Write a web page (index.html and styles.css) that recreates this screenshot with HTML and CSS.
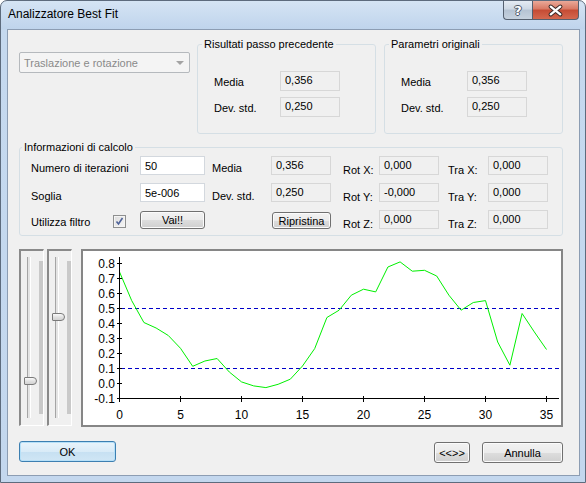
FILE: index.html
```html
<!DOCTYPE html>
<html lang="it">
<head>
    <meta charset="UTF-8">
    <title>Analizzatore Best Fit</title>
    <link rel="stylesheet" href="styles.css">
</head>
<body>
<div class="window">
    <div class="titlebar">
        <span class="title">Analizzatore Best Fit</span>
        <div class="caption-buttons">
            <span class="cap-btn help">?</span>
            <span class="cap-btn close">
                <svg width="47" height="19" viewBox="0 0 47 19">
                    <path d="M18.5 5.5L28.5 13.5M28.5 5.5L18.5 13.5" stroke="#3b2a28" stroke-width="4.5" stroke-linecap="round"/>
                    <path d="M18.5 5.5L28.5 13.5M28.5 5.5L18.5 13.5" stroke="#fff" stroke-width="2.4" stroke-linecap="round"/>
                </svg>
            </span>
        </div>
    </div>

    <div class="client">
        <!-- riga superiore -->
        <div class="top-row">
            <div class="combo">
                <span>Traslazione e rotazione</span>
                <span class="arrow"></span>
            </div>

            <fieldset class="group results">
                <legend>Risultati passo precedente</legend>
                <div class="stats">
                    <span class="lbl">Media</span><span class="ro">0,356</span>
                    <span class="lbl">Dev. std.</span><span class="ro">0,250</span>
                </div>
            </fieldset>

            <fieldset class="group original">
                <legend>Parametri originali</legend>
                <div class="stats">
                    <span class="lbl">Media</span><span class="ro">0,356</span>
                    <span class="lbl">Dev. std.</span><span class="ro">0,250</span>
                </div>
            </fieldset>
        </div>

        <!-- informazioni di calcolo -->
        <fieldset class="group calc">
            <legend>Informazioni di calcolo</legend>
            <div class="calc-grid">
                <span class="lbl">Numero di iterazioni</span>
                <input class="edit" type="text" value="50">
                <span class="lbl mid">Media</span>
                <span class="ro">0,356</span>
                <span class="lbl rot">Rot X:</span>
                <span class="ro">0,000</span>
                <span class="lbl tra">Tra X:</span>
                <span class="ro">0,000</span>

                <span class="lbl low">Soglia</span>
                <input class="edit" type="text" value="5e-006">
                <span class="lbl mid low">Dev. std.</span>
                <span class="ro">0,250</span>
                <span class="lbl rot">Rot Y:</span>
                <span class="ro">-0,000</span>
                <span class="lbl tra">Tra Y:</span>
                <span class="ro">0,000</span>

                <div class="check-cell">
                    <span class="lbl">Utilizza filtro</span>
                    <span class="checkbox">
                        <svg width="11" height="11" viewBox="0 0 11 11">
                            <path d="M2.5 5.5L4.5 8L8.5 2" fill="none" stroke="#4f6399" stroke-width="1.6"/>
                        </svg>
                    </span>
                </div>
                <button class="btn btn-go">Vai!!</button>
                <span></span>
                <button class="btn btn-reset">Ripristina</button>
                <span class="lbl rot">Rot Z:</span>
                <span class="ro">0,000</span>
                <span class="lbl tra">Tra Z:</span>
                <span class="ro">0,000</span>
            </div>
        </fieldset>

        <!-- grafico -->
        <div class="chart-row">
            <div class="slider">
                <div class="channel"></div>
                <div class="tickbar"></div>
                <div class="thumb" style="top: 126px;"></div>
            </div>
            <div class="slider">
                <div class="channel"></div>
                <div class="tickbar"></div>
                <div class="thumb" style="top: 62px;"></div>
            </div>
            <div class="chart">
                <svg class="plot" width="478" height="174" viewBox="0 0 478 174">
                    <path d="M38 57.5H476M38 117.5H476" stroke="#0000c8" stroke-dasharray="4 3"/>
                    <path d="M37 57.5h2M37 117.5h2" stroke="#e0e000"/>
                    <polyline fill="none" stroke="#00f000" stroke-width="1"
                        points="36.5,20.9 48.7,49.6 60.9,71.5 73.1,77 85.3,84.5 97.5,97.3 109.7,115.3 121.9,110 134.1,107.5 146.3,121 158.5,130.9 170.7,134.9 182.9,136.6 195.1,133.3 207.3,128.2 219.5,115 231.7,97.6 243.9,66.5 256.1,59.2 268.3,44.2 280.5,38.2 292.7,40.9 304.9,16 317.1,10.9 329.3,20.2 341.5,19.3 353.7,25 365.9,44.2 378.1,59.2 390.3,51.5 402.5,49.6 414.7,91 426.9,114.2 439.1,62.5 451.3,80.9 463.5,98.5"/>
                    <g stroke="#000" fill="none">
                        <path d="M36.5 6V147.5M34 147.5H476"/>
                        <path d="M34 12.5H39M34 27.5H39M34 42.5H39M34 57.5H39M34 72.5H39M34 87.5H39M34 102.5H39M34 117.5H39M34 132.5H39"/>
                        <path d="M36.5 145V151M97.5 145V151M158.5 145V151M219.5 145V151M280.5 145V151M341.5 145V151M402.5 145V151M463.5 145V151"/>
                    </g>
                    <g class="y-labels">
                        <text x="32" y="17">0.8</text>
                        <text x="32" y="32">0.7</text>
                        <text x="32" y="47">0.6</text>
                        <text x="32" y="62">0.5</text>
                        <text x="32" y="77">0.4</text>
                        <text x="32" y="92">0.3</text>
                        <text x="32" y="107">0.2</text>
                        <text x="32" y="122">0.1</text>
                        <text x="32" y="137">0.0</text>
                        <text x="32" y="152">-0.1</text>
                    </g>
                    <g class="x-labels">
                        <text x="36.5" y="168">0</text>
                        <text x="97.5" y="168">5</text>
                        <text x="158.5" y="168">10</text>
                        <text x="219.5" y="168">15</text>
                        <text x="280.5" y="168">20</text>
                        <text x="341.5" y="168">25</text>
                        <text x="402.5" y="168">30</text>
                        <text x="463.5" y="168">35</text>
                    </g>
                </svg>
            </div>
        </div>

        <!-- pulsanti -->
        <div class="button-row">
            <button class="btn btn-ok">OK</button>
            <button class="btn btn-swap">&lt;&lt;&gt;&gt;</button>
            <button class="btn btn-cancel">Annulla</button>
        </div>
    </div>
</div>
</body>
</html>
```

FILE: styles.css
```css
* {
    box-sizing: border-box;
}

body {
    margin: 0;
    background: #fff;
    font-family: "Liberation Sans", Arial, sans-serif;
    font-size: 11px;
    color: #000;
}

/* Finestra */
.window {
    width: 586px;
    height: 483px;
    border: 1px solid #5d6b7d;
    border-radius: 7px 7px 0 0;
    background: linear-gradient(#d5e4f4, #bfd4ec 28px, #c5d9ef 29px, #c3d7ee);
    overflow: hidden;
}

.titlebar {
    display: flex;
    align-items: flex-start;
    height: 28px;
    padding-left: 7px;
}

.title {
    font-size: 12px;
    line-height: 27px;
}

.caption-buttons {
    display: flex;
    margin-left: auto;
    margin-right: 6px;
}

.cap-btn {
    display: flex;
    align-items: center;
    justify-content: center;
    height: 19px;
    border: 1px solid #55606f;
    border-top: none;
}

.cap-btn.help {
    width: 29px;
    border-right: none;
    border-radius: 0 0 0 4px;
    background: linear-gradient(#e4ebf3, #cdd8e4 45%, #b5c3d3 50%, #c6d2df);
    color: #fff;
    font-family: "DejaVu Sans", sans-serif;
    font-size: 13px;
    font-weight: bold;
    text-shadow: 1px 0 #4b5666, -1px 0 #4b5666, 0 1px #4b5666, 0 -1px #4b5666;
}

.cap-btn.close {
    width: 47px;
    border-radius: 0 0 4px 0;
    background: linear-gradient(#eaa999, #d87863 45%, #c54b34 50%, #d4684f);
}

/* Area client */
.client {
    width: 573px;
    height: 447px;
    margin-left: 6px;
    padding: 7px 16px 0 11px;
    border: 1px solid #8c9db3;
    background: #f0f0f0;
}

.top-row {
    display: flex;
    align-items: flex-start;
}

.combo {
    display: flex;
    align-items: center;
    justify-content: space-between;
    width: 171px;
    height: 21px;
    margin-top: 15px;
    padding: 0 5px 0 4px;
    border: 1px solid #b5b9bd;
    border-radius: 2px;
    background: #f4f4f4;
    color: #8a8a8a;
}

.combo .arrow {
    border-left: 4px solid transparent;
    border-right: 4px solid transparent;
    border-top: 4px solid #a3a3a3;
}

/* Group box */
.group {
    margin: 0;
    padding: 0;
    min-width: 0;
    border: 1px solid #d5dfe5;
    border-radius: 3px;
}

.group legend {
    margin-left: 4px;
    padding: 0 2px;
    line-height: 14px;
}

.results {
    width: 179px;
    margin-left: 7px;
}

.original {
    width: 179px;
    margin-left: 8px;
}

.stats {
    display: grid;
    grid-template-columns: 66px 60px;
    grid-auto-rows: 20px;
    row-gap: 6px;
    padding: 20px 0 16px 16px;
}

.stats .lbl {
    padding-top: 5px;
}

.lbl {
    line-height: 13px;
    padding-top: 6px;
    white-space: nowrap;
}

.lbl.low {
    padding-top: 7px;
}

.lbl.mid {
    padding-left: 7px;
}

.lbl.rot {
    padding-top: 8px;
    padding-left: 12px;
}

.lbl.tra {
    padding-top: 8px;
    padding-left: 9px;
}

.ro {
    height: 19px;
    padding-left: 4px;
    border: 1px solid #d7d7d7;
    background: #f0f0f0;
    line-height: 16px;
}

.stats .ro {
    height: 20px;
}

.edit {
    width: 65px;
    height: 19px;
    margin: 0;
    padding: 0 4px;
    border: 1px solid #d3d8de;
    background: #fff;
    font: inherit;
    color: #000;
}

/* Informazioni di calcolo */
.calc {
    width: 544px;
    margin-top: 6px;
}

.calc legend {
    margin-left: 2px;
}

.calc-grid {
    display: grid;
    grid-template-columns: 109px 65px 66px 60px 48px 60px 49px 60px;
    grid-auto-rows: 19px;
    row-gap: 8px;
    padding: 2px 0 6px 11px;
}

.check-cell {
    display: flex;
    align-items: flex-start;
}

.checkbox {
    display: flex;
    align-items: center;
    justify-content: center;
    width: 13px;
    height: 13px;
    margin: 5px 14px 0 auto;
    border: 1px solid #8e8f8f;
    background: linear-gradient(135deg, #dcdcdc, #f6f6f6);
    box-shadow: inset 0 0 0 1px #f4f4f4;
}

.btn {
    margin: 0;
    padding: 0;
    border: 1px solid #707070;
    border-radius: 3px;
    background: linear-gradient(#f2f2f2, #ebebeb 50%, #dddddd 51%, #cfcfcf);
    box-shadow: inset 0 0 0 1px #fbfbfb;
    font: inherit;
    color: #000;
}

.btn-go {
    width: 65px;
    height: 18px;
    margin-top: 1px;
}

.btn-reset {
    width: 59px;
    height: 17px;
    margin: 2px 0 0 1px;
}

/* Grafico e slider */
.chart-row {
    display: flex;
    align-items: flex-start;
    height: 178px;
    margin-top: 13px;
}

.slider {
    position: relative;
    display: flex;
    align-items: flex-start;
    width: 25px;
    height: 177px;
    border-top: 2px solid #8a8a8a;
    border-left: 2px solid #8a8a8a;
    border-right: 1px solid #fff;
    border-bottom: 1px solid #fff;
}

.slider + .slider {
    margin-left: 3px;
}

.channel {
    width: 4px;
    height: 161px;
    margin: 6px 0 0 6px;
    border-left: 1px solid #a5a5a5;
    border-right: 1px solid #fff;
    background: #e4e4e4;
}

.tickbar {
    width: 4px;
    height: 153px;
    margin: 10px 0 0 8px;
    background: #c9c9c9;
}

.thumb {
    position: absolute;
    left: 3px;
    width: 13px;
    height: 8px;
    border: 1px solid #7a7a7a;
    border-radius: 1px 4px 4px 1px;
    background: linear-gradient(#fafafa, #e2e2e2 50%, #d2d2d2);
}

.chart {
    width: 482px;
    height: 178px;
    margin-left: 9px;
    border: 2px solid #868686;
    background: #fff;
}

.plot {
    display: block;
}

.plot text {
    font: 12px "Liberation Sans", Arial, sans-serif;
    fill: #000;
}

.y-labels text {
    text-anchor: end;
}

.x-labels text {
    text-anchor: middle;
}

/* Pulsanti in basso */
.button-row {
    display: flex;
    align-items: flex-start;
    margin-top: 14px;
}

.btn-ok {
    width: 97px;
    height: 21px;
    border-color: #3c7fb1;
    background: linear-gradient(#e9f4fb, #d9ebf7 50%, #c6e0f2 51%, #d0e6f5);
    box-shadow: inset 0 0 0 1px #b6e0f8;
}

.btn-swap {
    width: 36px;
    height: 21px;
    margin: 1px 0 0 auto;
}

.btn-cancel {
    width: 81px;
    height: 21px;
    margin: 1px 0 0 12px;
}
```
